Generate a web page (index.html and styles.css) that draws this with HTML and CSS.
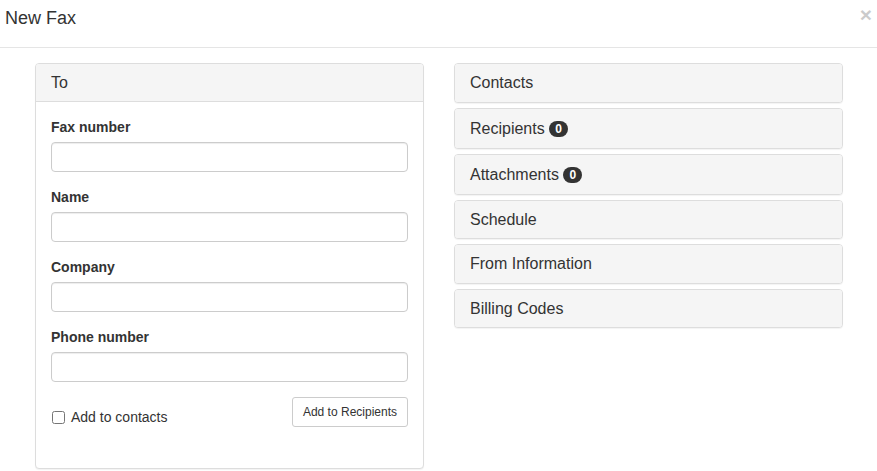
FILE: index.html
```html
<!DOCTYPE html>
<html>
<head lang="en">
    <meta charset="UTF-8">
    <title>New Fax</title>
    <link rel="stylesheet" href="styles.css">
</head>
<body>
<div id="modal">
    <div class="modal-header">
        <h4 class="modal-title">New Fax</h4>
        <span class="close">&times;</span>
    </div>
    <div class="modal-body">
        <div class="panel to-panel">
            <div class="panel-heading">To</div>
            <div class="panel-body">
                <div class="form-group">
                    <label>Fax number</label>
                    <input type="text" class="form-control">
                </div>
                <div class="form-group">
                    <label>Name</label>
                    <input type="text" class="form-control">
                </div>
                <div class="form-group">
                    <label>Company</label>
                    <input type="text" class="form-control">
                </div>
                <div class="form-group">
                    <label>Phone number</label>
                    <input type="text" class="form-control">
                </div>
                <div class="form-actions">
                    <label class="checkbox"><input type="checkbox"> Add to contacts</label>
                    <button class="btn">Add to Recipients</button>
                </div>
            </div>
        </div>
        <div class="panel-group">
            <div class="panel"><div class="panel-heading">Contacts</div></div>
            <div class="panel"><div class="panel-heading with-badge">Recipients <span class="badge">0</span></div></div>
            <div class="panel"><div class="panel-heading with-badge">Attachments <span class="badge">0</span></div></div>
            <div class="panel"><div class="panel-heading">Schedule</div></div>
            <div class="panel"><div class="panel-heading">From Information</div></div>
            <div class="panel"><div class="panel-heading">Billing Codes</div></div>
        </div>
    </div>
</div>
</body>
</html>
```
FILE: styles.css
```css
*{
    margin: 0;
    padding: 0;
    box-sizing: border-box;
}
body{
    font-family: "Liberation Sans", Arial, sans-serif;
    font-size: 14px;
    color: #333;
    background: #fff;
}
.modal-header{
    display: flex;
    justify-content: space-between;
    padding: 8px 5px 19px 5px;
    border-bottom: 1px solid #e5e5e5;
}
.modal-title{
    font-size: 18px;
    font-weight: normal;
    line-height: 20px;
}
.close{
    font-size: 21px;
    font-weight: bold;
    line-height: 1;
    color: #000;
    opacity: 0.2;
    margin-top: -4px;
    cursor: pointer;
}
.modal-body{
    display: grid;
    grid-template-columns: 389px 389px;
    column-gap: 30px;
    padding: 15px 35px;
    align-items: start;
}
.panel{
    border: 1px solid #ddd;
    border-radius: 4px;
    background: #fff;
    box-shadow: 0 1px 1px rgba(0,0,0,0.05);
}
.panel-heading{
    background: #f5f5f5;
    padding: 10px 15px;
    font-size: 16px;
    line-height: 17.5px;
    border-radius: 3px;
}
.panel-heading.with-badge{
    padding: 11px 15px 10.5px;
}
.to-panel .panel-heading{
    line-height: 17px;
    border-bottom: 1px solid #ddd;
    border-radius: 3px 3px 0 0;
}
.panel-body{
    padding: 15px;
}
.form-group{
    margin-bottom: 15px;
}
.form-group label{
    display: block;
    font-weight: bold;
    line-height: 20px;
    margin-bottom: 5px;
}
.form-control{
    display: block;
    width: 100%;
    height: 30px;
    border: 1px solid #ccc;
    border-radius: 4px;
    box-shadow: inset 0 1px 1px rgba(0,0,0,0.075);
    font: inherit;
    padding: 5px 10px;
}
.form-actions{
    display: flex;
    justify-content: space-between;
    align-items: center;
    margin-bottom: 26px;
}
.checkbox{
    display: flex;
    align-items: center;
    gap: 6px;
    margin-top: 10px;
}
.checkbox input{
    width: 13px;
    height: 13px;
    margin-left: 1px;
}
.btn{
    font-family: inherit;
    font-size: 12px;
    line-height: 18px;
    padding: 5px 10px;
    color: #333;
    background: #fff;
    border: 1px solid #ccc;
    border-radius: 3px;
    cursor: pointer;
}
.panel-group .panel + .panel{
    margin-top: 5px;
}
.badge{
    display: inline-block;
    background: #333;
    color: #fff;
    font-size: 12px;
    font-weight: bold;
    line-height: 12px;
    padding: 2px 6px;
    border-radius: 10px;
    vertical-align: top;
    margin-top: 1px;
}
```
